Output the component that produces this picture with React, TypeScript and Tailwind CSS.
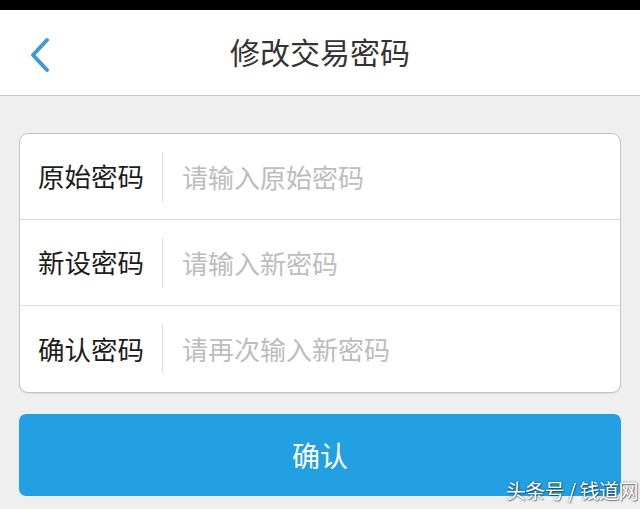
import React from "react";

const rows = [
  { label: "原始密码", hint: "请输入原始密码" },
  { label: "新设密码", hint: "请输入新密码" },
  { label: "确认密码", hint: "请再次输入新密码" },
];

export default function App() {
  return (
    <div
      className="w-[640px] h-[509px] bg-[#efefef] flex flex-col overflow-hidden relative"
      style={{ fontFamily: '"Noto Sans CJK SC", "Noto Sans", sans-serif' }}
    >
      {/* status bar */}
      <div className="h-[10px] bg-black shrink-0" />

      {/* title bar */}
      <div className="h-[86px] bg-white border-b border-[#c8c8c8] flex items-center relative shrink-0">
        <svg
          className="absolute left-[28px] top-[27px]"
          width="24"
          height="36"
          viewBox="0 0 24 36"
          fill="none"
        >
          <path
            d="M19 3 L5 18 L19 33"
            stroke="#3b9bd6"
            strokeWidth="4"
            strokeLinecap="round"
            strokeLinejoin="round"
          />
        </svg>
        <div className="w-full text-center text-[30px] leading-none text-[#333333] -mt-[4px]">
          修改交易密码
        </div>
      </div>

      {/* form */}
      <div className="px-[19px] pt-[37px]">
        <div className="bg-white border border-[#c4c4c4] rounded-[9px] flex flex-col shadow-[0_1px_1px_rgba(0,0,0,0.08)]">
          {rows.map((r, i) => (
            <div
              key={r.label}
              className={
                "h-[86px] flex items-center " +
                (i < rows.length - 1 ? "border-b border-[#dcdcdc]" : "")
              }
            >
              <div className="w-[142px] pl-[18px] text-[26.5px] leading-none text-[#1c1c1c]">
                {r.label}
              </div>
              <div className="w-px h-[50px] bg-[#dedede]" />
              <div className="pl-[19px] text-[26px] leading-none text-[#bdbdbd]">
                {r.hint}
              </div>
            </div>
          ))}
        </div>

        <button className="mt-[21px] w-full h-[82px] rounded-[7px] bg-[#22a0e2] text-white text-[28px] leading-none flex items-center justify-center">
          确认
        </button>
      </div>

      {/* watermark */}
      <div
        className="absolute right-[2px] bottom-[8px] text-[20px] leading-none text-white tracking-[-0.5px]"
        style={{ textShadow: "0 0 2px rgba(0,0,0,0.55), 1px 1px 1px rgba(0,0,0,0.4)" }}
      >
        头条号 / 钱道网
      </div>
    </div>
  );
}
